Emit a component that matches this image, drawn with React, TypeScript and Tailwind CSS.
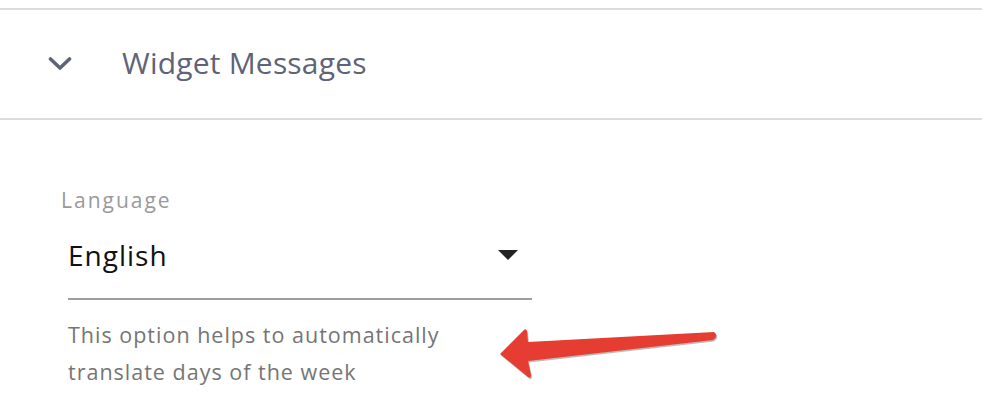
export default function App() {
    return (
        <div className="w-[982px] h-[420px] bg-white overflow-hidden relative" style={{ fontFamily: '"Open Sans", sans-serif' }}>
            <div className="pt-2">
                {/* Section header */}
                <div className="border-t-2 border-b-2 border-[#dcdcdc] h-[112px] flex items-center">
                    <div className="w-[122px] pl-[48px] flex items-center">
                        <svg width="24" height="16" viewBox="0 0 24 16" className="text-[#5f6378]">
                            <polyline points="2.5,3 12,12 21.5,3" fill="none" stroke="currentColor" strokeWidth="3.6" strokeLinecap="round" strokeLinejoin="round" />
                        </svg>
                    </div>
                    <h2 className="text-[30px] tracking-[0.2px] text-[#5f6378] -mt-[4px]">Widget Messages</h2>
                </div>

                {/* Language field */}
                <div className="pl-[61px] pt-[68px]">
                    <label className="block text-[21px] tracking-[2px] leading-6 text-[#9a9a9a]">Language</label>
                    <div className="ml-[7px] w-[464px]">
                        <div className="h-[88px] flex items-center justify-between border-b-2 border-[#9e9e9e]">
                            <span className="text-[28px] tracking-[1px] text-[#111]">English</span>
                            <svg width="20" height="11" viewBox="0 0 20 11" className="mr-[14px]">
                                <path d="M0 0 L20 0 L10 10 Z" fill="#222" />
                            </svg>
                        </div>
                        <p className="mt-[16px] text-[21.5px] tracking-[1px] leading-[37px] text-[#757575] whitespace-nowrap">
                            This option helps to automatically
                            <br />
                            translate days of the week
                        </p>
                    </div>
                </div>
            </div>

            {/* Annotation arrow */}
            <svg className="absolute left-0 top-0 pointer-events-none" width="982" height="420">
                <path
                    d="M500 354 L524 330 Q526 328 527 331 L528 342 L714 332 Q719 336 713 340 L528 361 L531 375 Q531 379 528 377 Z"
                    fill="#a0a0a0"
                    transform="translate(1 1.5)"
                    opacity="0.7"
                />
                <path
                    d="M500 354 L524 330 Q526 328 527 331 L528 342 L714 332 Q719 336 713 340 L528 361 L531 375 Q531 379 528 377 Z"
                    fill="#e53d32"
                />
            </svg>
        </div>
    )
}
